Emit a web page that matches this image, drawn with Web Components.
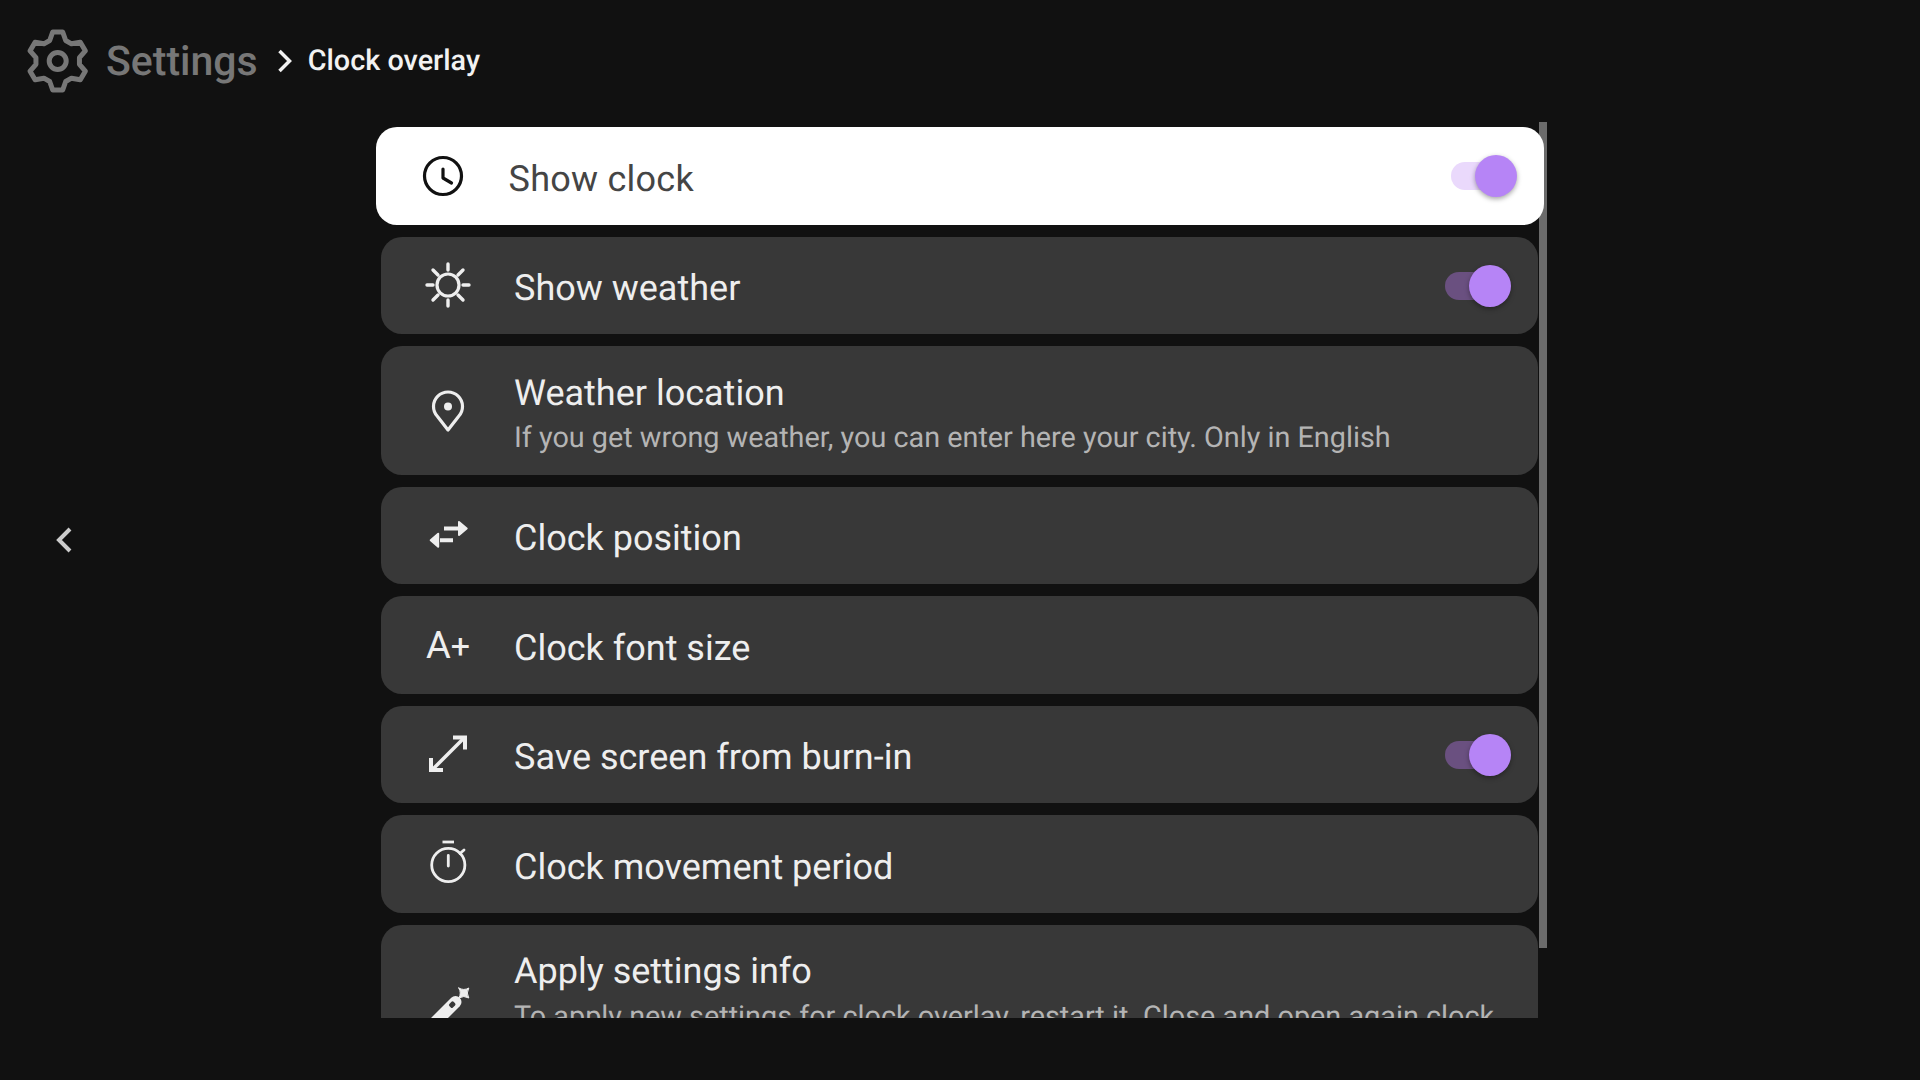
<!DOCTYPE html>
<html>
<head>
<meta charset="utf-8">
<title>Clock overlay</title>
<style>
  html, body { margin: 0; height: 100%; background: #111; }
  body { font-family: Roboto, "Liberation Sans", sans-serif; text-rendering: geometricPrecision; }
</style>
</head>
<body>
<settings-page>
  <bread-crumb slot="header" root="Settings" current="Clock overlay"></bread-crumb>
  <setting-row focused>
    <ui-icon slot="icon" name="clock"></ui-icon>
    Show clock
    <toggle-switch slot="end"></toggle-switch>
  </setting-row>
  <setting-row>
    <ui-icon slot="icon" name="sun"></ui-icon>
    Show weather
    <toggle-switch slot="end"></toggle-switch>
  </setting-row>
  <setting-row>
    <ui-icon slot="icon" name="pin"></ui-icon>
    Weather location
    <span slot="sub">If you get wrong weather, you can enter here your city. Only in English</span>
  </setting-row>
  <setting-row>
    <ui-icon slot="icon" name="swap"></ui-icon>
    Clock position
  </setting-row>
  <setting-row>
    <ui-icon slot="icon" name="font"></ui-icon>
    Clock font size
  </setting-row>
  <setting-row>
    <ui-icon slot="icon" name="expand"></ui-icon>
    Save screen from burn-in
    <toggle-switch slot="end"></toggle-switch>
  </setting-row>
  <setting-row>
    <ui-icon slot="icon" name="timer"></ui-icon>
    Clock movement period
  </setting-row>
  <setting-row>
    <ui-icon slot="icon" name="wand"></ui-icon>
    Apply settings info
    <span slot="sub">To apply new settings for clock overlay, restart it. Close and open again clock overlay to see the changes you made here</span>
  </setting-row>
</settings-page>

<script>
const icons = {
  clock: `<circle cx="30" cy="30" r="18.5" stroke-width="3.2"/><path d="M30 23v9l8.500 5" stroke-width="3.2"/>`,
  sun: `<circle cx="30" cy="30" r="11" stroke-width="3.200"/>
    <path d="M30 9v6M30 45v6M9 30h6M45 30h6M15 15l5 5M40 40l5 5M15 45l5-5M40 20l5-5" stroke-width="3.400"/>`,
  pin: `<path d="M30 50 19.500 36.500a14.500 14.500 0 1 1 21 0Z" stroke-width="3.200"/><circle cx="30" cy="26.500" r="4" fill="currentColor" stroke="none"/>`,
  swap: `<path d="M26 23.500h19M22 35.250h13" stroke-width="4" stroke-linecap="butt"/>
    <path d="M48.700 23.500 41 17v13ZM12.700 35.250l7.500-6.500v13Z" fill="currentColor" stroke-width="2"/>`,
  expand: `<path d="M35 13.500h12v12M25 46H13V34" stroke-width="4" stroke-linecap="butt" stroke-linejoin="miter"/><path d="M46 14 14 46" stroke-width="3.500" stroke-linecap="butt"/>`,
  timer: `<circle cx="30.300" cy="31" r="16.600" stroke-width="2.800"/><path d="M24.500 8h11.500" stroke-width="2.800" stroke-linecap="butt"/><path d="M30.300 21.500V32M42 19.500l4-3.500" stroke-width="2.800"/>`,
  wand: `<g transform="translate(.5 2)"><path d="M37 24-3 64" stroke-width="12"/><rect x="30.700" y="24.200" width="6" height="5" rx="1.500" transform="rotate(-45 33.700 26.700)" fill="#383838" stroke="none"/>
    <path d="M40.300 10Q45.300 13 50.300 10 47.300 15 50.300 20 45.300 17 40.300 20 43.300 15 40.300 10Z" fill="currentColor" stroke-width="1"/></g>`
}

// six-toothed cog outline, one tooth straight up
function gearPath(cx, cy) {
  const pts = []
  for (let i = 0; i < 6; i++) {
    const a = i * Math.PI / 3
    const local = [[-8, -20.500], [-5, -29], [5, -29], [8, -20.500]]
    for (const [x, y] of local) {
      pts.push(`${(cx + x * Math.cos(a) - y * Math.sin(a)).toFixed(2)} ${(cy + x * Math.sin(a) + y * Math.cos(a)).toFixed(2)}`)
    }
  }
  return 'M' + pts.join('L') + 'Z'
}

class UiIcon extends HTMLElement {
  connectedCallback() {
    const name = this.getAttribute('name')
    const root = this.attachShadow({ mode: 'open' })
    const body = name === 'font'
      ? `<span class="font">A<small>+</small></span>`
      : `<svg viewBox="0 0 60 60" width="60" height="60" fill="none" stroke="currentColor" stroke-linecap="round" stroke-linejoin="round">${icons[name]}</svg>`
    root.innerHTML = `
      <style>
        :host { display: flex; width: 60px; height: 60px; align-items: center; justify-content: center; }
        svg { display: block; overflow: visible; }
        .font { font-size: 38px; line-height: 60px; margin-top: 3px; white-space: nowrap; }
        small { font-size: 34px; }
      </style>${body}`
  }
}

class ToggleSwitch extends HTMLElement {
  constructor() {
    super()
    this.attachShadow({ mode: 'open' }).innerHTML = `
      <style>
        :host { display: block; position: relative; width: 66px; height: 42px; margin-top: 1px; }
        .track { position: absolute; left: 0; top: 7px; width: 60px; height: 28px; border-radius: 14px; background: var(--track, #6a5080); }
        .knob { position: absolute; right: 0; top: 0; width: 42px; height: 42px; border-radius: 50%; background: #b684f6; box-shadow: 0 2px 5px rgba(0,0,0,.35); }
      </style>
      <div class="track"></div><div class="knob"></div>`
  }
}

class SettingRow extends HTMLElement {
  constructor() {
    super()
    this.attachShadow({ mode: 'open' }).innerHTML = `
      <style>
        :host { display: flex; flex: none; align-items: center; box-sizing: border-box; min-height: 97.5px; padding: 0 27px 0 37px; border-radius: 21px; background: #383838; color: #eee; }
        :host([focused]) { margin: 0 -5.5px; background: #fff; color: #454545; --track: #ead9fc; position: relative; z-index: 2; }
        :host([focused]) ::slotted(ui-icon) { color: #111; }
        :host([focused]) .title { letter-spacing: .25px; }
        .icon { flex: none; width: 60px; height: 60px; margin-right: 36px; }
        .text { flex: 1; min-width: 0; padding: 25.5px 0 19.5px; }
        .title { font-size: 36px; line-height: 42px; }
        ::slotted([slot=sub]) { display: block; font-size: 28.8px; line-height: 34px; margin-top: 7.5px; color: #b4b4b4; }
        ::slotted([slot=end]) { flex: none; }
      </style>
      <div class="icon"><slot name="icon"></slot></div>
      <div class="text"><div class="title"><slot></slot></div><slot name="sub"></slot></div>
      <slot name="end"></slot>`
  }
}

class BreadCrumb extends HTMLElement {
  connectedCallback() {
    this.attachShadow({ mode: 'open' }).innerHTML = `
      <style>
        :host { display: flex; align-items: center; height: 122px; padding-left: 27px; box-sizing: border-box; }
        svg { display: block; flex: none; }
        .root { font-size: 41px; font-weight: 500; color: #777; margin: 2px 0 0 18px; }
        .sep { margin: 0 16px 0 19px; }
        .current { font-size: 28.8px; font-weight: 500; color: #f2f2f2; }
      </style>
      <svg viewBox="0 0 61 64" width="61" height="64" fill="none" stroke="#777" stroke-width="5" stroke-linejoin="round">
        <circle cx="30.700" cy="32" r="8.500"/>
        <path d="${gearPath(30.7, 32)}"/>
      </svg>
      <span class="root">${this.getAttribute('root')}</span>
      <svg class="sep" viewBox="0 0 15 24" width="15" height="24" fill="none" stroke="#f2f2f2" stroke-width="3.500"><path d="M2.500 2l10 10-10 10"/></svg>
      <span class="current">${this.getAttribute('current')}</span>`
  }
}

class SettingsPage extends HTMLElement {
  constructor() {
    super()
    this.attachShadow({ mode: 'open' }).innerHTML = `
      <style>
        :host { display: grid; grid-template-columns: 381px 1157px; grid-template-rows: 122px 896px; height: 1080px; background: #111; overflow: hidden; }
        .head { grid-column: 1 / 3; grid-row: 1; }
        .nav { grid-column: 1; grid-row: 1 / 3; height: 1080px; display: flex; align-items: center; padding-left: 56px; box-sizing: border-box; }
        .nav svg { display: block; }
        .list-wrap { position: relative; grid-column: 2; grid-row: 2; }
        .list { height: 100%; display: flex; flex-direction: column; gap: 12px; margin: 0 -6px; padding: 5px 6px 0; box-sizing: border-box; overflow: hidden; position: relative; }
        .bar { position: absolute; left: 1158px; top: 0; width: 8px; height: 826px; background: #6b6b6b; }
      </style>
      <div class="nav"><svg viewBox="0 0 16 26" width="16" height="26" fill="none" stroke="#ccc" stroke-width="4"><path d="M14 2 3 13l11 11"/></svg></div>
      <div class="head"><slot name="header"></slot></div>
      <div class="list-wrap">
        <div class="bar"></div>
        <div class="list"><slot></slot></div>
      </div>`
  }
}

customElements.define('ui-icon', UiIcon)
customElements.define('toggle-switch', ToggleSwitch)
customElements.define('setting-row', SettingRow)
customElements.define('bread-crumb', BreadCrumb)
customElements.define('settings-page', SettingsPage)
</script>
</body>
</html>
